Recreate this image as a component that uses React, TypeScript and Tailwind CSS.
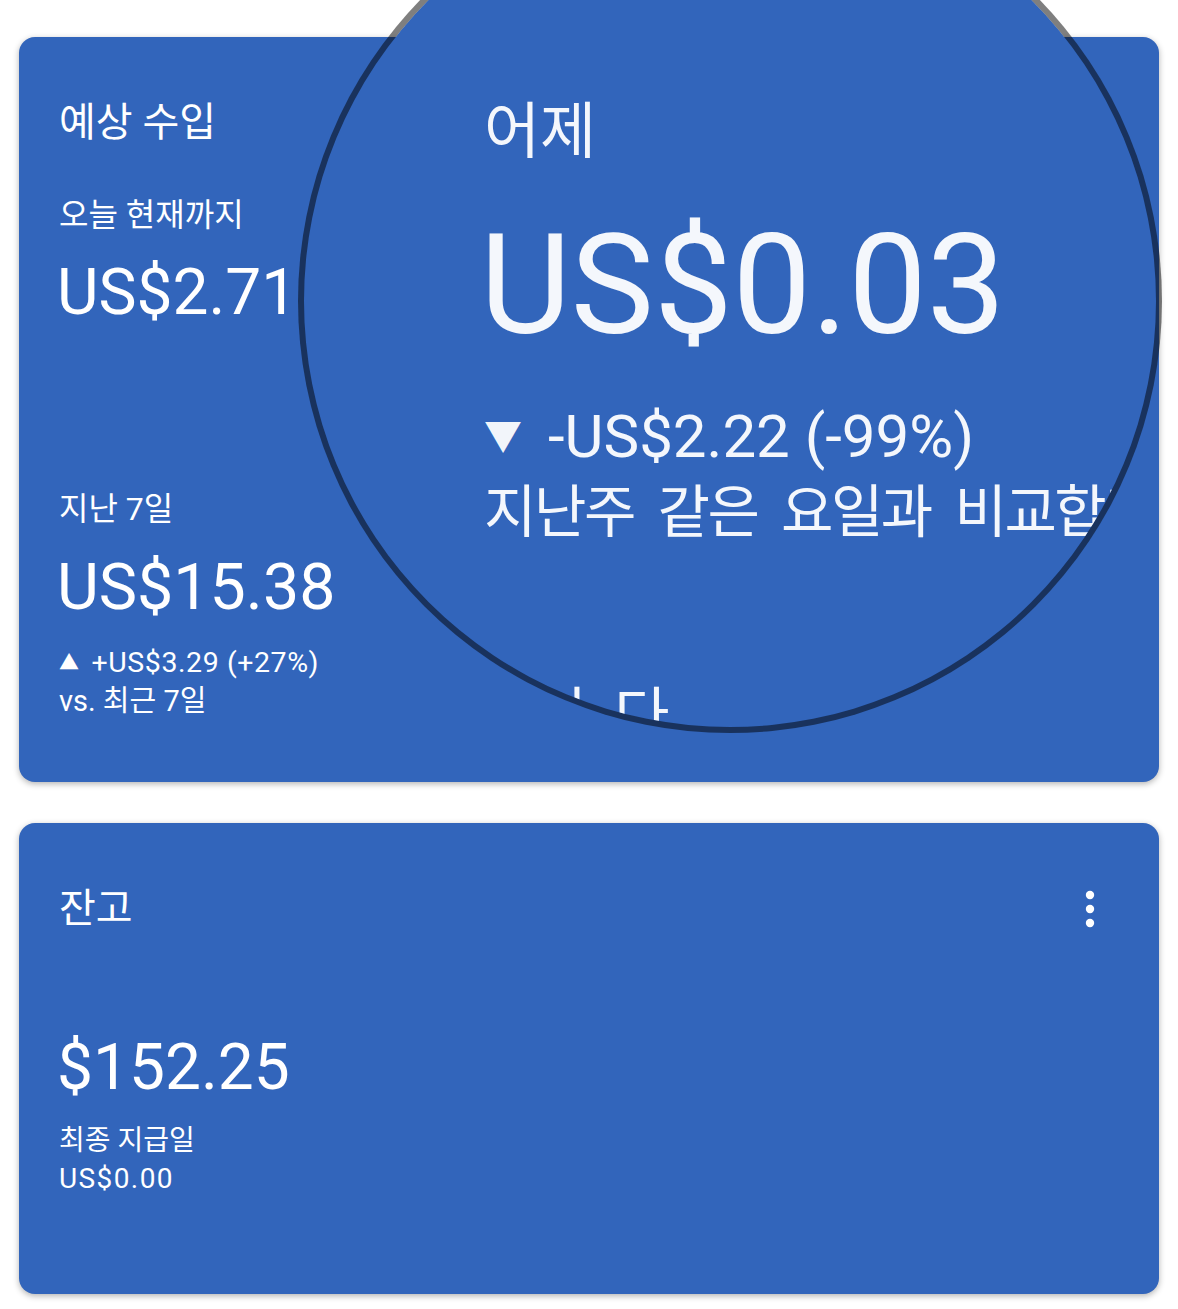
const font = "font-['Roboto','Noto_Sans_CJK_KR',sans-serif]";

const MoreIcon = () => (
  <svg width="20" height="40" viewBox="0 0 20 40" fill="white">
    <circle cx="10" cy="6" r="4.2" />
    <circle cx="10" cy="20" r="4.2" />
    <circle cx="10" cy="34" r="4.2" />
  </svg>
);

const Magnifier = () => (
  <div className="absolute left-[298px] top-[-131px] w-[864px] h-[864px] rounded-full border-[6px] border-black/50 bg-[#3265bb] bg-clip-padding overflow-hidden">
    <div className="flex flex-col pl-[180px] text-white/95 whitespace-nowrap">
      <div className="mt-[222px] text-[61px] leading-[70px]">어제</div>
      <div className="mt-[43px] ml-[-4px] text-[140px] leading-[150px]">US$0.03</div>
      <div className="mt-[42px] flex items-center text-[60px] leading-[70px]">
        <span className="text-[38px] mr-[26px]">▼</span>
        <span>-US$2.22 (-99%)</span>
      </div>
      <div className="mt-[6px] text-[57px] leading-[70px] tracking-[-2.5px] [word-spacing:12px]">지난주 같은 요일과 비교합니</div>
      <div className="mt-[134px] pl-[48px] text-[60px] leading-[70px] tracking-[0.45em]">니다</div>
    </div>
  </div>
);

const EarningsCard = () => (
  <div className="mx-[19px] mt-[37px] h-[745px] rounded-2xl bg-[#3265bb] shadow-[0_2px_6px_rgba(0,0,0,0.3)] text-white">
    <div className="flex flex-col pl-[40px]">
      <div className="mt-[62px] text-[40px] leading-[48px]">예상 수입</div>
      <div className="mt-[48px] text-[32px] leading-[40px]">오늘 현재까지</div>
      <div className="mt-[22px] ml-[-2px] text-[64px] leading-[72px]">US$2.71</div>
      <div className="mt-[160px] text-[32px] leading-[40px]">지난 7일</div>
      <div className="mt-[22px] ml-[-2px] text-[64.5px] leading-[72px]">US$15.38</div>
      <div className="mt-[21px] flex items-center text-[28.5px] leading-[38px] tracking-[0.02em]">
        <span className="text-[20px] mr-[12px]">▲</span>
        <span>+US$3.29 (+27%)</span>
      </div>
      <div className="text-[29px] leading-[38px]">vs. 최근 7일</div>
    </div>
  </div>
);

const BalanceCard = () => (
  <div className="mx-[19px] mt-[41px] h-[471px] rounded-2xl bg-[#3265bb] shadow-[0_2px_6px_rgba(0,0,0,0.3)] text-white">
    <div className="flex flex-col pl-[40px]">
      <div className="mt-[62px] flex items-center justify-between pr-[59px]">
        <span className="text-[40px] leading-[48px]">잔고</span>
        <MoreIcon />
      </div>
      <div className="mt-[99px] ml-[-2px] text-[64px] leading-[72px]">$152.25</div>
      <div className="mt-[18px] text-[28px] leading-[38px]">최종 지급일</div>
      <div className="text-[28px] leading-[38px] tracking-[0.05em]">US$0.00</div>
    </div>
  </div>
);

export default function App() {
  return (
    <div className={`relative w-[1178px] h-[1309px] overflow-hidden bg-white ${font}`}>
      <div className="pt-px -mt-px">
        <EarningsCard />
        <BalanceCard />
      </div>
      <Magnifier />
    </div>
  );
}
